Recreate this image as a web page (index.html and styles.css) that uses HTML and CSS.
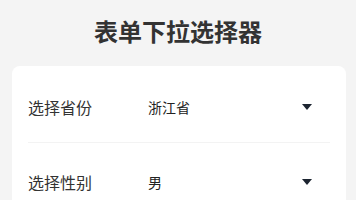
FILE: index.html
```html
<!DOCTYPE html>
<html lang="zh-CN">

<head>
  <meta charset="UTF-8">
  <meta name="viewport" content="width=device-width, initial-scale=1.0">
  <title>表单下拉选择器</title>
  <link rel="stylesheet" href="styles.css">
</head>

<body>
  <div class="page-title">表单下拉选择器</div>

  <div class="form-card">
    <div class="form-row">
      <div class="form-label">选择省份</div>
      <div class="form-value">浙江省</div>
      <div class="form-arrow"></div>
    </div>
    <div class="form-row">
      <div class="form-label">选择性别</div>
      <div class="form-value">男</div>
      <div class="form-arrow"></div>
    </div>
  </div>
</body>

</html>
```

FILE: styles.css
```css
body {
  margin: 0;
  background-color: #f4f4f4;
  font-family: "Noto Sans CJK SC", "Noto Sans", sans-serif;
  color: #333;
}

.page-title {
  padding-top: 15px;
  line-height: 32px;
  font-size: 24px;
  font-weight: bold;
  text-align: center;
  color: #333;
}

.form-card {
  margin: 19px 10px 0 12px;
  padding: 2px 16px 0;
  background-color: #FFF;
  border-radius: 8px;
}

.form-row {
  display: flex;
  align-items: center;
  padding: 29px 0 25px;
  border-bottom: 1px solid #f3f3f3;
}

.form-label {
  width: 120px;
  font-size: 16px;
  line-height: 20px;
  color: #333;
}

.form-value {
  flex: 1;
  font-size: 14px;
  line-height: 20px;
  color: #222;
}

.form-arrow {
  width: 0;
  height: 0;
  margin-right: 18px;
  border-left: 5px solid transparent;
  border-right: 5px solid transparent;
  border-top: 6px solid #1c2430;
}
```
